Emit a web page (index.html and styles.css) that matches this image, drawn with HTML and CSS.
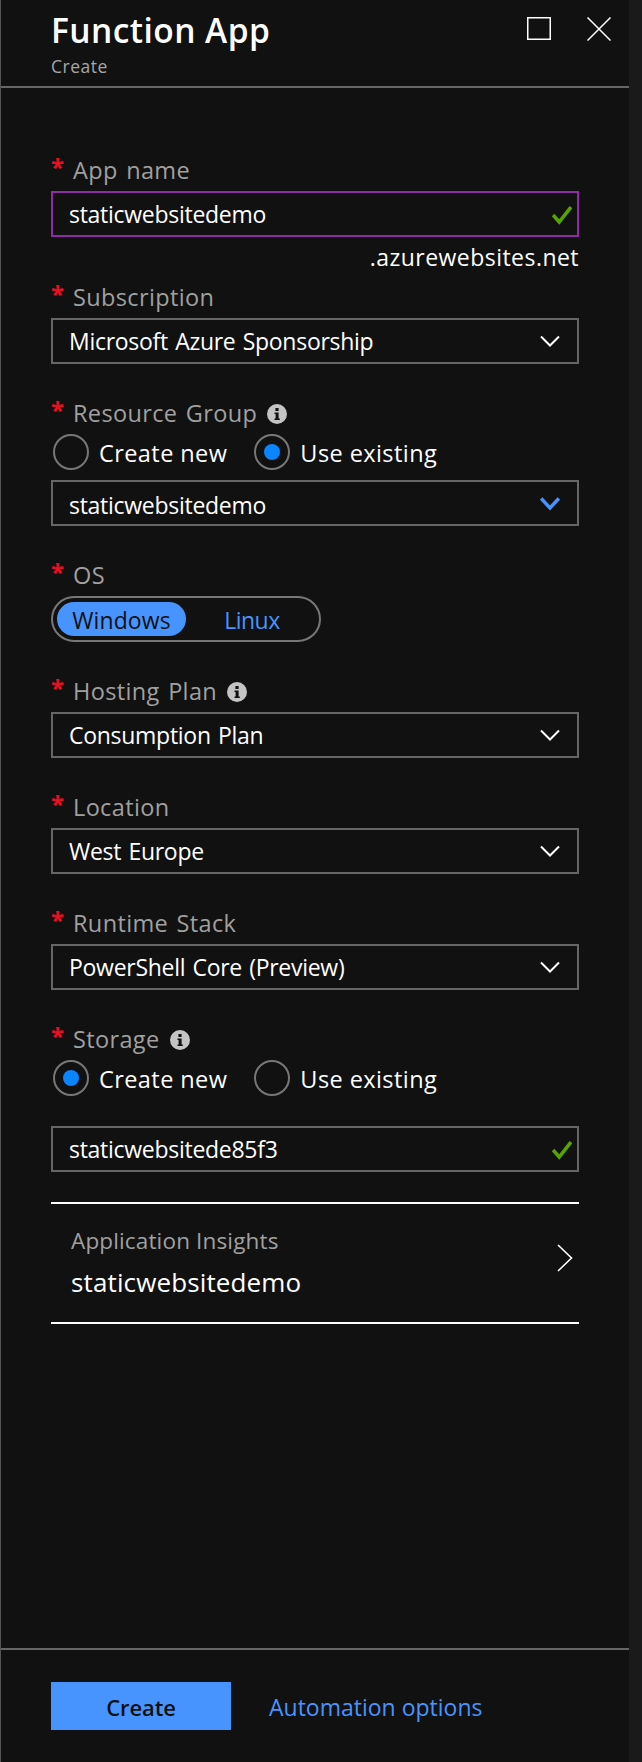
FILE: index.html
```html
<!DOCTYPE html>
<html lang="en">
<head>
<meta charset="utf-8">
<title>Function App</title>
<link rel="stylesheet" href="styles.css">
</head>
<body>
<div class="blade">
  <header class="head">
    <div class="titles">
      <h1 class="title">Function App</h1>
      <div class="subtitle">Create</div>
    </div>
    <div class="winbtns">
      <svg class="winbtn" width="24" height="24" viewBox="0 0 24 24"><rect x="0.75" y="0.75" width="22.5" height="21.5" fill="none" stroke="#fff" stroke-width="1.5"/></svg>
      <svg class="winbtn" width="24" height="24" viewBox="0 0 24 24"><path d="M0.5 0.5L23.5 23.5M23.5 0.5L0.5 23.5" fill="none" stroke="#fff" stroke-width="1.5"/></svg>
    </div>
  </header>
  <main class="form">
    <section class="field first">
      <div class="label"><span class="star">*</span>App name</div>
      <div class="box active"><span>staticwebsitedemo</span>
        <svg class="check" width="20" height="20" viewBox="0 0 20 20"><path d="M1 10L7.2 17L19 2" fill="none" stroke="#57a300" stroke-width="3.6"/></svg>
      </div>
      <div class="suffix">.azurewebsites.net</div>
    </section>
    <section class="field tight">
      <div class="label"><span class="star">*</span>Subscription</div>
      <div class="box"><span>Microsoft Azure Sponsorship</span>
        <svg class="chev" width="20" height="12" viewBox="0 0 20 12"><path d="M1 1.5L10 10.5L19 1.5" fill="none" stroke="#fff" stroke-width="2"/></svg>
      </div>
    </section>
    <section class="field">
      <div class="label label-compact"><span class="star">*</span>Resource Group
        <svg class="info" width="20" height="20" viewBox="0 0 20 20"><circle cx="10" cy="10" r="10" fill="#c4c4c4"/><rect x="8.4" y="4" width="3.2" height="3" fill="#111"/><path d="M7.5 8.5H11.6V14.5H12.8V16H7.5V14.5H8.6V10H7.5Z" fill="#111"/></svg>
      </div>
      <div class="radios">
        <div class="radio"><span class="dot"></span><span class="radio-text">Create new</span></div>
        <div class="radio"><span class="dot on"></span><span class="radio-text">Use existing</span></div>
      </div>
      <div class="box box-low"><span>staticwebsitedemo</span>
        <svg class="chev" width="20" height="14" viewBox="0 0 20 14"><path d="M1.2 1.5L10 11L18.8 1.5" fill="none" stroke="#4894fe" stroke-width="3.4"/></svg>
      </div>
    </section>
    <section class="field os">
      <div class="label label-os"><span class="star">*</span>OS</div>
      <div class="toggle">
        <div class="opt sel">Windows</div>
        <div class="opt off">Linux</div>
      </div>
    </section>
    <section class="field">
      <div class="label"><span class="star">*</span>Hosting Plan
        <svg class="info" width="20" height="20" viewBox="0 0 20 20"><circle cx="10" cy="10" r="10" fill="#c4c4c4"/><rect x="8.4" y="4" width="3.2" height="3" fill="#111"/><path d="M7.5 8.5H11.6V14.5H12.8V16H7.5V14.5H8.6V10H7.5Z" fill="#111"/></svg>
      </div>
      <div class="box"><span>Consumption Plan</span>
        <svg class="chev" width="20" height="12" viewBox="0 0 20 12"><path d="M1 1.5L10 10.5L19 1.5" fill="none" stroke="#fff" stroke-width="2"/></svg>
      </div>
    </section>
    <section class="field">
      <div class="label"><span class="star">*</span>Location</div>
      <div class="box"><span>West Europe</span>
        <svg class="chev" width="20" height="12" viewBox="0 0 20 12"><path d="M1 1.5L10 10.5L19 1.5" fill="none" stroke="#fff" stroke-width="2"/></svg>
      </div>
    </section>
    <section class="field">
      <div class="label"><span class="star">*</span>Runtime Stack</div>
      <div class="box"><span>PowerShell Core (Preview)</span>
        <svg class="chev" width="20" height="12" viewBox="0 0 20 12"><path d="M1 1.5L10 10.5L19 1.5" fill="none" stroke="#fff" stroke-width="2"/></svg>
      </div>
    </section>
    <section class="field">
      <div class="label label-compact"><span class="star">*</span>Storage
        <svg class="info" width="20" height="20" viewBox="0 0 20 20"><circle cx="10" cy="10" r="10" fill="#c4c4c4"/><rect x="8.4" y="4" width="3.2" height="3" fill="#111"/><path d="M7.5 8.5H11.6V14.5H12.8V16H7.5V14.5H8.6V10H7.5Z" fill="#111"/></svg>
      </div>
      <div class="radios">
        <div class="radio"><span class="dot on"></span><span class="radio-text">Create new</span></div>
        <div class="radio"><span class="dot"></span><span class="radio-text">Use existing</span></div>
      </div>
      <div class="box spaced"><span>staticwebsitede85f3</span>
        <svg class="check" width="20" height="20" viewBox="0 0 20 20"><path d="M1 10L7.2 17L19 2" fill="none" stroke="#57a300" stroke-width="3.6"/></svg>
      </div>
    </section>
    <section class="insights">
      <div>
        <div class="ins-label">Application Insights</div>
        <div class="ins-value">staticwebsitedemo</div>
      </div>
      <svg class="ins-arrow" width="16" height="28" viewBox="0 0 16 28"><path d="M1 1L14.5 14L1 27" fill="none" stroke="#fff" stroke-width="1.6"/></svg>
    </section>
  </main>
  <footer class="foot">
    <button class="primary">Create</button>
    <a class="link">Automation options</a>
  </footer>
</div>
</body>
</html>
```
FILE: styles.css
```css
* { box-sizing: border-box; }
html, body { margin: 0; padding: 0; }
body {
  width: 642px;
  height: 1762px;
  background: #1a1a1a;
  color: #fff;
  font-family: "Open Sans", "Noto Sans", sans-serif;
  overflow: hidden;
}
.blade {
  width: 629px;
  height: 1762px;
  background: #111;
  border-left: 1px solid #555;
  display: flex;
  flex-direction: column;
}
.head {
  height: 88px;
  flex: none;
  border-bottom: 2px solid #666;
  padding: 0 18px 0 50px;
  display: flex;
  justify-content: space-between;
}
.title {
  margin: 10px 0 0;
  font-size: 33.5px;
  line-height: 40px;
  font-weight: 600;
  letter-spacing: 0.45px;
}
.subtitle {
  font-size: 17.5px;
  line-height: 20px;
  color: #a6a6a6;
  letter-spacing: 0.5px;
  margin-top: 6px;
}
.winbtns { display: flex; gap: 36px; padding-top: 17px; }
.form { flex: 1; padding: 0 50px; }
.field { margin-top: 36px; }
.first { margin-top: 69px; }
.tight { margin-top: 15px; }
.label {
  height: 26px;
  margin-bottom: 8px;
  font-size: 23.5px;
  line-height: 26px;
  color: #a0a0a0;
  letter-spacing: 0.36px;
  word-spacing: 2px;
  display: flex;
  align-items: center;
}
.label-compact { margin-bottom: 6px; }
.label-os { margin-bottom: 8px; }
.star {
  color: #e81123;
  width: 22px;
  font-size: 24px;
  margin-top: -6px;
  flex: none;
  font-weight: 700;
  letter-spacing: 0;
}
.info { margin: 2px 0 0 10px; flex: none; }
.box {
  width: 528px;
  height: 46px;
  border: 2px solid #666;
  padding: 0 16px;
  display: flex;
  align-items: center;
  justify-content: space-between;
  font-size: 23px;
  letter-spacing: -0.28px;
  word-spacing: 1.5px;
}
.box-low > span { margin-top: 3px; }
.box-low > .chev { margin-top: 2px; }
.active { border-color: #8e2da3; }
.spaced { margin-top: 28px; }
.chev { margin-right: 1px; flex: none; }
.check { margin: 2px -11px 0 0; flex: none; }
.suffix {
  width: 528px;
  height: 24px;
  margin-top: 8px;
  text-align: right;
  font-size: 23px;
  line-height: 24px;
  letter-spacing: 0.46px;
}
.radios { display: flex; height: 40px; margin-bottom: 8px; gap: 27px; padding-left: 2px; }
.radio {
  display: flex;
  align-items: center;
  gap: 10px;
  font-size: 23.5px;
  letter-spacing: 0.42px;
}
.radio-text { margin-top: 2px; }
.dot {
  width: 36px;
  height: 36px;
  border: 2px solid #777;
  border-radius: 50%;
  flex: none;
  display: flex;
  align-items: center;
  justify-content: center;
}
.dot.on::after {
  content: "";
  width: 16px;
  height: 16px;
  border-radius: 50%;
  background: #0a84ff;
}
.toggle {
  width: 270px;
  height: 46px;
  border: 2px solid #777;
  border-radius: 23px;
  padding: 4px;
  display: flex;
  font-size: 23px;
  letter-spacing: 0.1px;
}
.opt {
  width: 130px;
  padding-top: 2px;
  border-radius: 17px;
  display: flex;
  align-items: center;
  justify-content: center;
  color: #4894fe;
}
.opt.sel { background: #4894fe; color: #111; }
.opt.off { letter-spacing: -0.5px; padding-left: 3px; }
.insights {
  width: 528px;
  height: 122px;
  margin-top: 30px;
  border-top: 2px solid #fff;
  border-bottom: 2px solid #fff;
  padding: 0 6px 0 20px;
  display: flex;
  align-items: center;
  justify-content: space-between;
}
.ins-arrow { margin-top: -10px; }
.ins-label { font-size: 22.5px; line-height: 26px; color: #a0a0a0; letter-spacing: 0.15px; }
.ins-value { font-size: 26px; line-height: 34px; margin-top: 11px; letter-spacing: 0.13px; }
.foot {
  height: 114px;
  flex: none;
  border-top: 2px solid #666;
  padding: 32px 0 0 50px;
  display: flex;
  align-items: flex-start;
  gap: 38px;
}
.primary {
  width: 180px;
  height: 48px;
  padding: 2px 0 0;
  background: #4894fe;
  border: 0;
  color: #111;
  font: 600 22px "Open Sans", "Noto Sans", sans-serif;
  letter-spacing: -0.1px;
}
.link {
  color: #4894fe;
  font-size: 23px;
  line-height: 51px;
}
```
